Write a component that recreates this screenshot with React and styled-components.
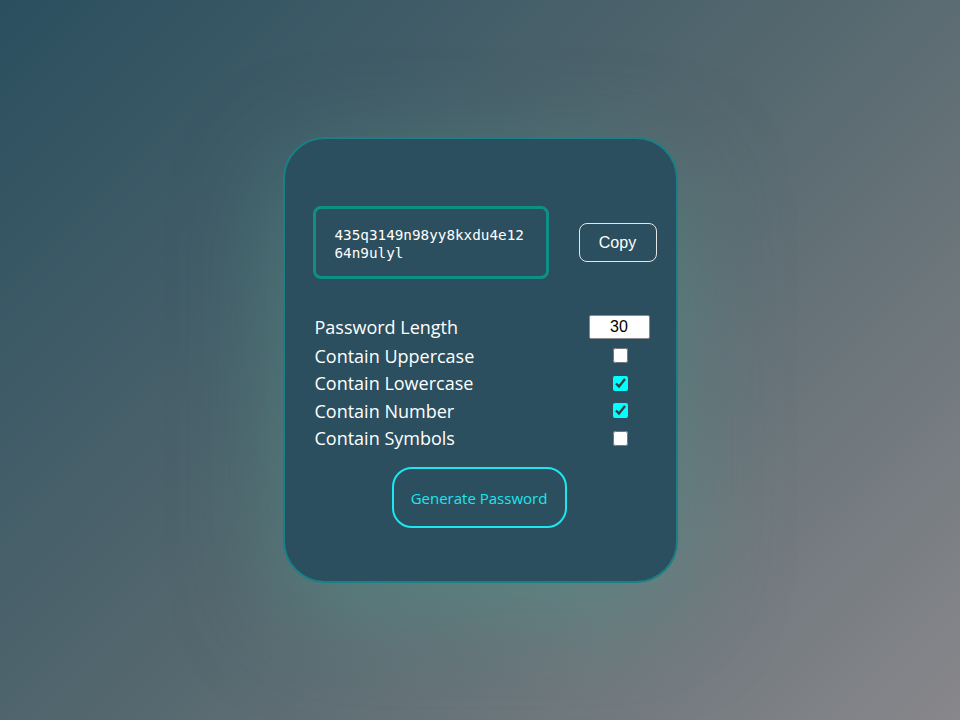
import React, { useState } from 'react';
import styled, { createGlobalStyle } from 'styled-components';

const GlobalStyle = createGlobalStyle`
  * { box-sizing: border-box; }
  body {
    margin: 0;
    font-family: "Open Sans", "Noto Sans", sans-serif;
  }
`;

const options = [
  { key: 'upper', label: 'Contain Uppercase' },
  { key: 'lower', label: 'Contain Lowercase' },
  { key: 'number', label: 'Contain Number' },
  { key: 'symbol', label: 'Contain Symbols' },
];

const App = () => {
  const [length, setLength] = useState(30);
  const [flags, setFlags] = useState({
    upper: false,
    lower: true,
    number: true,
    symbol: false,
  });

  const toggle = (key) => setFlags({ ...flags, [key]: !flags[key] });

  return (
    <Page>
      <GlobalStyle />
      <Card>
        <ResultRow>
          <Result>435q3149n98yy8kxdu4e1264n9ulyl</Result>
          <CopyButton type="button">Copy</CopyButton>
        </ResultRow>
        <Settings>
          <Row>
            <Label>Password Length</Label>
            <LengthInput
              type="number"
              value={length}
              onChange={(e) => setLength(e.target.value)}
            />
          </Row>
          {options.map((opt) => (
            <Row key={opt.key}>
              <Label>{opt.label}</Label>
              <CheckCell>
                <Check type="checkbox" checked={flags[opt.key]} onChange={() => toggle(opt.key)} />
              </CheckCell>
            </Row>
          ))}
        </Settings>
        <GenerateButton type="button">Generate Password</GenerateButton>
      </Card>
    </Page>
  );
};

export default App;

const Page = styled.div`
  min-height: 100vh;
  display: flex;
  align-items: center;
  justify-content: center;
  background: linear-gradient(135deg, #2a4f5f 0%, #55686f 50%, #88878b 100%);
`;

const Card = styled.div`
  width: 395px;
  height: 446px;
  border: 2px solid #1b7f86;
  border-radius: 42px;
  background: #2b4f5e;
  box-shadow: 0 30px 100px rgba(80, 150, 140, 0.5);
  padding: 67px 19px 0 28px;
  display: flex;
  flex-direction: column;
`;

const ResultRow = styled.div`
  display: flex;
  align-items: center;
  justify-content: space-between;
`;

const Result = styled.div`
  width: 236px;
  height: 73px;
  border: 3px solid #0f9084;
  border-radius: 8px;
  padding: 17px 19px 15px;
  color: #ffffff;
  font-family: "DejaVu Sans Mono", monospace;
  font-size: 14.3px;
  line-height: 18px;
  word-break: break-all;
`;

const CopyButton = styled.button`
  width: 78px;
  height: 39px;
  border: 1px solid #e6e6e6;
  border-radius: 8px;
  background: transparent;
  color: #ffffff;
  font-family: "Liberation Sans", Arial, sans-serif;
  font-size: 16px;
  cursor: pointer;
`;

const Settings = styled.div`
  margin-top: 35px;
  padding: 0 7px 0 2px;
  display: flex;
  flex-direction: column;
`;

const Row = styled.div`
  display: flex;
  align-items: center;
  justify-content: space-between;
  height: 27.5px;
  &:first-child {
    height: 26px;
    margin-bottom: 2px;
  }
`;

const Label = styled.span`
  color: #ffffff;
  font-size: 18px;
`;

const LengthInput = styled.input`
  width: 61px;
  height: 24px;
  border: 1px solid #8a8a8a;
  border-radius: 2px;
  background: #ffffff;
  color: #000000;
  font-family: "Liberation Sans", Arial, sans-serif;
  font-size: 16px;
  text-align: center;
  padding: 0;
  &::-webkit-inner-spin-button {
    -webkit-appearance: none;
  }
`;

const CheckCell = styled.div`
  width: 59px;
  display: flex;
  justify-content: center;
`;

const Check = styled.input`
  width: 15px;
  height: 15px;
  margin: 0;
  accent-color: #00ffff;
`;

const GenerateButton = styled.button`
  align-self: center;
  margin: 15px 0 0 -11px;
  width: 175px;
  height: 61px;
  border: 2px solid #1ee6ee;
  border-radius: 20px;
  background: transparent;
  color: #1ee6ee;
  font-family: "Open Sans", "Noto Sans", sans-serif;
  font-size: 15px;
  cursor: pointer;
`;
